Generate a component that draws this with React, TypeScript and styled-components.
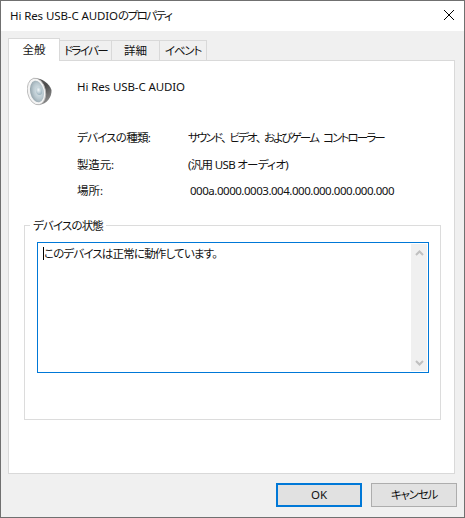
import React from 'react';
import styled, { createGlobalStyle } from 'styled-components';

const GlobalStyle = createGlobalStyle`
  html, body {
    margin: 0;
    padding: 0;
    background: #fff;
  }
  * {
    box-sizing: border-box;
  }
`;

const Dialog = styled.div`
  width: 465px;
  height: 518px;
  display: flex;
  flex-direction: column;
  border: 1px solid #707070;
  background: #f0f0f0;
  color: #111;
  font-family: "Noto Sans", "Noto Sans CJK JP", sans-serif;
  font-size: 11.5px;
  line-height: 16px;
  font-feature-settings: "palt";
  overflow: hidden;
`;

// yu gothic ui kana run narrower than noto, so each string gets its own tracking
const Text = styled.span<{ $tracking?: number }>`
  letter-spacing: ${p => p.$tracking ?? 0}px;
  white-space: pre;
`;

const TitleBar = styled.div`
  height: 30px;
  flex: none;
  display: flex;
  align-items: center;
  justify-content: space-between;
  padding: 0 10px 0 9px;
  background: #fff;
`;

const CloseIcon = styled.svg`
  width: 10px;
  height: 10px;
  margin-bottom: 2px;
  display: block;
`;

const Body = styled.div`
  flex: 1;
  min-height: 0;
  display: flex;
  flex-direction: column;
  padding: 8px 9px 0 7px;
`;

const TabStrip = styled.div`
  height: 22px;
  flex: none;
  display: flex;
  align-items: flex-end;
  margin-bottom: -1px;
  position: relative;
`;

const Tab = styled.div<{ $active?: boolean; $width: number }>`
  width: ${p => p.$width}px;
  height: ${p => (p.$active ? 23 : 21)}px;
  display: flex;
  align-items: center;
  justify-content: center;
  border: 1px solid #d9d9d9;
  border-left-width: ${p => (p.$active ? 1 : 0)}px;
  border-bottom-width: ${p => (p.$active ? 0 : 1)}px;
  background: ${p => (p.$active ? '#fff' : '#f0f0f0')};
  padding-bottom: ${p => (p.$active ? 1 : 0)}px;
  padding-top: ${p => (p.$active ? 0 : 1)}px;
`;

const Panel = styled.div`
  height: 414px;
  flex: none;
  display: flex;
  flex-direction: column;
  border: 1px solid #d9d9d9;
  background: #fff;
  padding: 16px 13px 0 15px;
`;

const DeviceHeader = styled.div`
  height: 28px;
  flex: none;
  display: flex;
  align-items: flex-start;
  padding-left: 3px;
`;

const SpeakerIcon = styled.svg`
  width: 25px;
  height: 29px;
  flex: none;
  margin-right: 25px;
`;

const DeviceName = styled.div`
  margin-top: 2px;
`;

const Properties = styled.div`
  margin-top: 20px;
  padding-left: 53px;
  display: grid;
  grid-template-columns: 111px 1fr;
  grid-auto-rows: 26.5px;
  align-items: center;
`;

const PropertyValue = styled.div<{ $indent?: boolean }>`
  padding-left: ${p => (p.$indent ? 2 : 0)}px;
`;

const StatusGroup = styled.fieldset`
  margin: 13px 0 0;
  padding: 8px 11px 46px 12px;
  min-width: 0;
  border: 1px solid #dcdcdc;
`;

const StatusLegend = styled.legend`
  margin-left: -7px;
  padding: 0 3px;
`;

const StatusBox = styled.div`
  height: 131px;
  display: flex;
  border: 1px solid #0078d7;
  padding: 1px;
  background: #fff;
`;

const StatusText = styled.div`
  flex: 1;
  display: flex;
  align-items: flex-start;
  padding: 2px 0 0 4px;
`;

const Caret = styled.span`
  width: 1px;
  height: 13px;
  margin-top: 1px;
  flex: none;
  background: #000;
`;

const ScrollBar = styled.div`
  width: 16px;
  flex: none;
  display: flex;
  flex-direction: column;
  justify-content: space-between;
  align-items: center;
  padding: 6px 0 5px;
  background: #f0f0f0;
`;

const ScrollArrow = styled.svg`
  width: 9px;
  height: 6px;
  display: block;
`;

const Footer = styled.div`
  display: flex;
  justify-content: flex-end;
  gap: 9px;
  padding: 9px 0 0;
  margin-right: -2px;
`;

const DialogButton = styled.button<{ $primary?: boolean }>`
  width: 86px;
  height: 24px;
  padding: 0;
  font: inherit;
  color: inherit;
  font-feature-settings: inherit;
  background: #e1e1e1;
  border: ${p => (p.$primary ? '2px solid #0078d7' : '1px solid #adadad')};
`;

const properties = [
  {
    label: 'デバイスの種類:',
    labelTracking: -0.74,
    runs: [
      { text: 'サウンド', tracking: -1.85 },
      { text: '、', tracking: 2.5 },
      { text: 'ビデオ', tracking: -1.85 },
      { text: '、', tracking: 2.5 },
      { text: 'およびゲーム', tracking: -1.85 },
      { text: ' ', tracking: 2 },
      { text: 'コントローラー', tracking: -1.85 },
    ],
  },
  {
    label: '製造元:',
    labelTracking: -0.15,
    runs: [{ text: '(汎用 USB オーディオ)', tracking: -0.67 }],
  },
  {
    label: '場所:',
    labelTracking: 0,
    runs: [{ text: '000a.0000.0003.004.000.000.000.000.000', tracking: -0.47 }],
    indent: true,
  },
];

const tabs = [
  { label: '全般', width: 52, tracking: 0, active: true },
  { label: 'ドライバー', width: 52, tracking: -1.63 },
  { label: '詳細', width: 48, tracking: 0 },
  { label: 'イベント', width: 47, tracking: -1.23 },
];

const Speaker = () => (
  <SpeakerIcon viewBox="0 0 25 29">
    <defs>
      <linearGradient id="speakerBack" x1="0" y1="0" x2="0.6" y2="1">
        <stop offset="0" stopColor="#6a6a6a" />
        <stop offset="0.5" stopColor="#4a4a4a" />
        <stop offset="1" stopColor="#8c8c8c" />
      </linearGradient>
      <radialGradient id="speakerCone" cx="0.6" cy="0.5" r="0.65">
        <stop offset="0" stopColor="#dfe9ed" />
        <stop offset="0.55" stopColor="#b9c8cf" />
        <stop offset="1" stopColor="#8b9ba3" />
      </radialGradient>
      <radialGradient id="speakerDome" cx="0.45" cy="0.35" r="0.7">
        <stop offset="0" stopColor="#f2f7f9" />
        <stop offset="1" stopColor="#93acb8" />
      </radialGradient>
    </defs>
    <path d="M6 1.5 C12 0 22 5 24.5 13 C25 20 20 27 12 28 C7 28 6 20 6 1.5 Z" fill="url(#speakerBack)" />
    <ellipse cx="9.5" cy="14.5" rx="9" ry="13.5" transform="rotate(-12 9.5 14.5)" fill="#f4f4f4" stroke="#b4b4b4" strokeWidth="0.8" />
    <ellipse cx="10" cy="14.5" rx="6.8" ry="11" transform="rotate(-12 10 14.5)" fill="url(#speakerCone)" />
    <ellipse cx="12" cy="14" rx="3" ry="4" transform="rotate(-12 12 14)" fill="url(#speakerDome)" />
  </SpeakerIcon>
);

export default function App() {
  return (
    <>
      <GlobalStyle />
      <Dialog>
        <TitleBar>
          <div>
            <Text $tracking={-0.1}>Hi Res USB-C AUDIO</Text>
            <Text $tracking={-1.5}>のプロパティ</Text>
          </div>
          <CloseIcon viewBox="0 0 10 10">
            <path d="M0 0 L10 10 M10 0 L0 10" stroke="#000" strokeWidth="1" fill="none" />
          </CloseIcon>
        </TitleBar>
        <Body>
          <TabStrip>
            {tabs.map(tab => (
              <Tab key={tab.label} $active={tab.active} $width={tab.width}>
                <Text $tracking={tab.tracking}>{tab.label}</Text>
              </Tab>
            ))}
          </TabStrip>
          <Panel>
            <DeviceHeader>
              <Speaker />
              <DeviceName>
                <Text $tracking={-0.1}>Hi Res USB-C AUDIO</Text>
              </DeviceName>
            </DeviceHeader>
            <Properties>
              {properties.map(row => (
                <React.Fragment key={row.label}>
                  <div>
                    <Text $tracking={row.labelTracking}>{row.label}</Text>
                  </div>
                  <PropertyValue $indent={row.indent}>
                    {row.runs.map((run, i) => (
                      <Text key={i} $tracking={run.tracking}>{run.text}</Text>
                    ))}
                  </PropertyValue>
                </React.Fragment>
              ))}
            </Properties>
            <StatusGroup>
              <StatusLegend>
                <Text $tracking={-0.83}>デバイスの状態</Text>
              </StatusLegend>
              <StatusBox>
                <StatusText>
                  <Caret />
                  <Text $tracking={-0.82}>このデバイスは正常に動作しています。</Text>
                </StatusText>
                <ScrollBar>
                  <ScrollArrow viewBox="0 0 9 6">
                    <path d="M1 5 L4.5 1.5 L8 5" stroke="#c0c0c0" strokeWidth="2" fill="none" />
                  </ScrollArrow>
                  <ScrollArrow viewBox="0 0 9 6">
                    <path d="M1 1 L4.5 4.5 L8 1" stroke="#c0c0c0" strokeWidth="2" fill="none" />
                  </ScrollArrow>
                </ScrollBar>
              </StatusBox>
            </StatusGroup>
          </Panel>
          <Footer>
            <DialogButton $primary>OK</DialogButton>
            <DialogButton>
              <Text $tracking={-1.22}>キャンセル</Text>
            </DialogButton>
          </Footer>
        </Body>
      </Dialog>
    </>
  );
}
